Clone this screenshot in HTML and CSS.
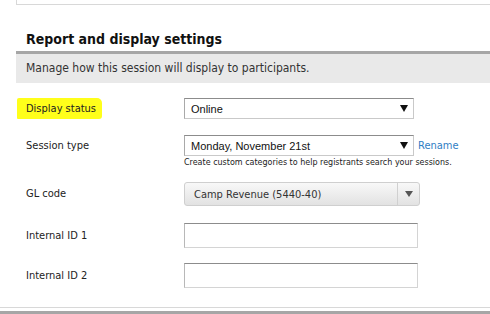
FILE: index.html
```html
<!DOCTYPE html>
<html lang="en">
<head>
    <meta charset="UTF-8">
    <title>Report and display settings</title>
    <link rel="stylesheet" href="styles.css">
</head>
<body>
    <!-- Bottom of the previous panel -->
    <div class="prev-panel"></div>

    <div class="section">
        <h2 class="section-title">Report and display settings</h2>
        <div class="section-intro">Manage how this session will display to participants.</div>

        <div class="form">
            <!-- Display status -->
            <div class="form-row row-status">
                <div class="form-label"><span class="marker">Display status</span></div>
                <div class="form-field">
                    <div class="select">
                        <span class="select-text">Online</span>
                        <svg class="select-arrow" width="8" height="7" viewBox="0 0 8 7"><path d="M0 0H8L4 7Z" fill="#111"/></svg>
                    </div>
                </div>
            </div>

            <!-- Session type -->
            <div class="form-row row-type">
                <div class="form-label">Session type</div>
                <div class="form-field">
                    <div class="field-line">
                        <div class="select">
                            <span class="select-text">Monday, November 21st</span>
                            <svg class="select-arrow" width="8" height="7" viewBox="0 0 8 7"><path d="M0 0H8L4 7Z" fill="#111"/></svg>
                        </div>
                        <a href="#" class="rename">Rename</a>
                    </div>
                    <div class="help">Create custom categories to help registrants search your sessions.</div>
                </div>
            </div>

            <!-- GL code -->
            <div class="form-row row-gl">
                <div class="form-label">GL code</div>
                <div class="form-field">
                    <div class="combo">
                        <span class="combo-text">Camp Revenue (5440-40)</span>
                        <span class="combo-btn">
                            <svg width="8" height="6" viewBox="0 0 8 6"><path d="M0 0H8L4 6Z" fill="#555"/></svg>
                        </span>
                    </div>
                </div>
            </div>

            <!-- Internal IDs -->
            <div class="form-row row-id">
                <div class="form-label">Internal ID 1</div>
                <div class="form-field"><input type="text" class="text-input"></div>
            </div>
            <div class="form-row row-id">
                <div class="form-label">Internal ID 2</div>
                <div class="form-field"><input type="text" class="text-input"></div>
            </div>
        </div>
    </div>

    <!-- Top of the next panel -->
    <div class="next-panel"></div>
</body>
</html>
```

FILE: styles.css
```css
/* Basic styling */
body {
    margin: 0;
    background-color: #fff;
    font-family: "DejaVu Sans Condensed", "DejaVu Sans", Verdana, sans-serif;
    color: #222;
    overflow: hidden;
}

.prev-panel {
    height: 4px;
    margin-left: 16px;
    border-left: 1px solid #d8d8d8;
    border-bottom: 1px solid #d8d8d8;
}

.section {
    margin-left: 16px;
}

.section-title {
    margin: 0;
    padding: 26px 0 0 10px;
    height: 20px;
    font-size: 14px;
    font-weight: bold;
    color: #111;
}

.section-intro {
    height: 29px;
    line-height: 29px;
    padding-left: 10px;
    border-top: 3px solid #a6a6a6;
    background-color: #e9e9e9;
    font-size: 12px;
    color: #333;
}

.form {
    padding-top: 15px;
}

.form-row {
    display: flex;
    align-items: flex-start;
}

.form-label {
    width: 158px;
    padding-left: 10px;
    font-size: 11px;
    color: #222;
    line-height: 21px;
}

.row-status { height: 37px; }
.row-type { height: 47px; }
.row-gl { height: 41px; }
.row-id { height: 40px; }

.row-gl .form-label { line-height: 24px; }
.row-id .form-label { line-height: 25px; }

.marker {
    display: inline-block;
    margin-left: -9px;
    padding: 0 6px 0 9px;
    background-color: #ffff1a;
    border-radius: 2px 5px 3px 1px;
}

.field-line {
    display: flex;
    align-items: center;
}

.select {
    box-sizing: border-box;
    width: 230px;
    height: 21px;
    display: flex;
    align-items: center;
    justify-content: space-between;
    padding: 0 5px 0 6px;
    border: 1px solid #c9c9c9;
    border-top-color: #8c8c8c;
    border-left-color: #a9a9a9;
    font-family: "Liberation Sans", Arial, sans-serif;
    font-size: 11px;
    color: #111;
}

.rename {
    margin-left: 4px;
    font-size: 11px;
    color: #2f7ec4;
    text-decoration: none;
}

.help {
    margin-top: 2px;
    font-family: "DejaVu Sans", Verdana, sans-serif;
    font-size: 8px;
    color: #222;
}

.combo {
    box-sizing: border-box;
    width: 236px;
    height: 24px;
    display: flex;
    align-items: center;
    border: 1px solid #cfcfcf;
    border-radius: 3px;
    background: linear-gradient(#f8f8f8, #e2e2e2);
    font-size: 11px;
    color: #333;
}

.combo-text {
    flex: 1;
    padding-left: 9px;
}

.combo-btn {
    width: 21px;
    height: 22px;
    display: flex;
    align-items: center;
    justify-content: center;
    border-left: 1px solid #d0d0d0;
}

.text-input {
    box-sizing: border-box;
    width: 234px;
    height: 25px;
    margin: 0;
    border: 1px solid #d4d4d4;
    border-top-color: #8c8c8c;
    border-left-color: #b8b8b8;
    background: #fff;
}

.next-panel {
    height: 3px;
    margin-top: 4px;
    border-top: 1px solid #d8d8d8;
    border-bottom: 3px solid #a6a6a6;
}
```
